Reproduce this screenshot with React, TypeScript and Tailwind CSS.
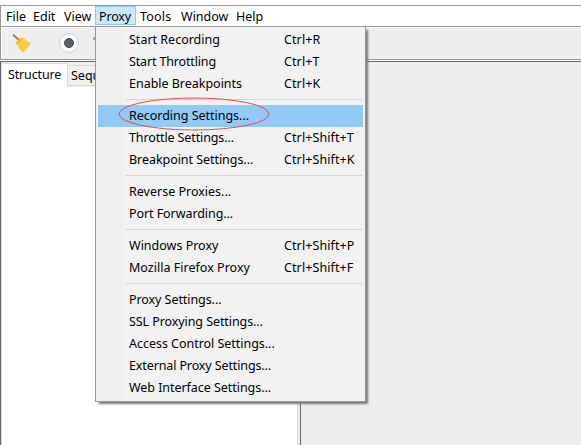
type Entry = { label: string; keys?: string; active?: boolean; tracking?: string };

const groups: Entry[][] = [
  [
    { label: 'Start Recording', keys: 'Ctrl+R' },
    { label: 'Start Throttling', keys: 'Ctrl+T', tracking: 'tracking-[-0.15px]' },
    { label: 'Enable Breakpoints', keys: 'Ctrl+K', tracking: 'tracking-[-0.02px]' },
  ],
  [
    { label: 'Recording Settings...', active: true, tracking: 'tracking-[-0.02px]' },
    { label: 'Throttle Settings...', keys: 'Ctrl+Shift+T', tracking: 'tracking-[-0.12px]' },
    { label: 'Breakpoint Settings...', keys: 'Ctrl+Shift+K', tracking: 'tracking-[-0.05px]' },
  ],
  [{ label: 'Reverse Proxies...' }, { label: 'Port Forwarding...', tracking: 'tracking-[-0.07px]' }],
  [
    { label: 'Windows Proxy', keys: 'Ctrl+Shift+P' },
    { label: 'Mozilla Firefox Proxy', keys: 'Ctrl+Shift+F', tracking: 'tracking-[0.02px]' },
  ],
  [
    { label: 'Proxy Settings...', tracking: 'tracking-[-0.07px]' },
    { label: 'SSL Proxying Settings...', tracking: 'tracking-[-0.08px]' },
    { label: 'Access Control Settings...', tracking: 'tracking-[-0.03px]' },
    { label: 'External Proxy Settings...', tracking: 'tracking-[-0.12px]' },
    { label: 'Web Interface Settings...', tracking: 'tracking-[-0.05px]' },
  ],
];

function Broom() {
  return (
    <svg className="ml-[11px] h-5 w-5" viewBox="0 0 20 20">
      <path d="M1.6 2.2 7 7" stroke="#a97c50" strokeWidth="1.9" strokeLinecap="round" />
      <path d="M4.2 9.6C5.8 8.8 7.6 6.8 8.2 4.6L12.6 5C13.6 7.2 15.6 9 18.8 10C17.6 12 16.8 13.6 16 14.6L14.6 15.6L13.4 17.4L11 19.6C8.6 17.8 6.4 15.6 5.8 12.6Z" fill="#fbcf45" />
      <path d="M4 9.4C5.8 8.6 7.4 6.8 8 4.8L10.6 5.4C9.8 8.4 7.6 10.8 4.8 11.8Z" fill="#f5b840" />
      <path d="M8.6 12.4 11.2 18.6M10.6 10.8 14.4 15.6M11.8 8.4 16.8 12.6" stroke="#f0b832" strokeWidth=".6" fill="none" />
    </svg>
  );
}

function Menu() {
  return (
    <div className="absolute top-[26px] left-[95px] h-[376px] w-[271px] border border-[#999] bg-[linear-gradient(90deg,#f0f0f0_27px,#f2f2f2_27px)] px-0.5 pt-0.5 shadow-[3px_3px_2px_-1px_#777]">
      {groups.map((group, g) => (
        <div key={g}>
          {g > 0 && (
            <div className="h-2.5 pt-1 pr-px pl-7">
              <div className="h-px bg-[#d5d5d5]" />
            </div>
          )}
          {group.map((item) => (
            <div
              key={item.label}
              className={`flex h-[22px] w-[265px] items-center pl-[31px] leading-[22px] ${item.active ? 'bg-[#91c9f7]' : ''}`}
            >
              <span className={`w-[155px] ${item.tracking ?? ''}`}>{item.label}</span>
              <span className="tracking-[0.1px]">{item.keys}</span>
            </div>
          ))}
        </div>
      ))}
      <svg className="absolute top-[69px] left-[22px] h-[36px] w-[154px]" viewBox="0 0 154 36" fill="none">
        <ellipse cx="76" cy="18" rx="75" ry="16" stroke="#f04848" />
      </svg>
    </div>
  );
}

export default function App() {
  return (
    <div className="relative flex h-[445px] w-[581px] flex-col overflow-hidden bg-white pt-[5px] font-['Noto_Sans',sans-serif] text-[12.5px] whitespace-pre text-black">
      <div className="flex h-[22px] border-y border-l border-[#999] leading-[21px]">
        <span className="w-[27px] pl-[5px]">File</span>
        <span className="w-[31px] pl-[5px]">Edit</span>
        <span className="w-9 pl-[5px]">View</span>
        <span className="h-[19px] w-[41px] border border-[#90c8f6] bg-[#cce8ff] pl-[3px] leading-[19px] tracking-[-0.15px]">Proxy</span>
        <span className="w-[41px] pl-1 tracking-[0.2px]">Tools</span>
        <span className="w-[55px] pl-1">Window</span>
        <span className="pl-1">Help</span>
      </div>
      <div className="flex h-[33px] items-center border-b border-l border-[#999] bg-[#eee] shadow-[inset_1px_1px_0_white]">
        <Broom />
        <div className="ml-[27px] flex h-5 w-5 items-center justify-center rounded-full border border-[#ccd2dc] bg-[#f8faff]">
          <div className="h-2.5 w-2.5 rounded-full border border-[#414650] bg-[#5b5f68]" />
        </div>
        <div className="mb-2.5 ml-3.5 h-[3px] w-1 rounded-full bg-[#999ba8]" />
      </div>
      <div className="mt-px flex flex-1 border-t border-l border-[#666]">
        <div className="flex w-[297px] flex-col border-r border-l border-[#d9d9d9] bg-white">
          <div className="flex h-[25px] items-end bg-[#eee]">
            <div className="mt-px h-6 w-[66px] border-t border-r border-[#d9d9d9] bg-white pl-1.5 leading-[22px] tracking-[-0.15px]">Structure</div>
            <div className="mb-px h-[21px] w-[70px] border-y border-r border-[#d9d9d9] bg-[#f0f0f0] pl-[3px] leading-[20px]">Sequence</div>
          </div>
        </div>
        <div className="w-0.5 bg-[#eee]" />
        <div className="flex-1 border-l border-[#666] bg-[#eee]" />
      </div>
      <Menu />
    </div>
  );
}
